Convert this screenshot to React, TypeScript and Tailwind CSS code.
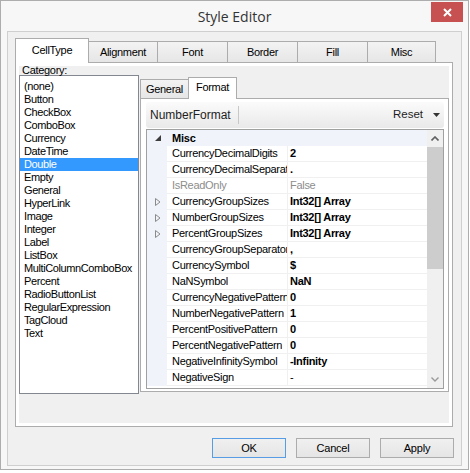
import React from "react";

const categories = [
  "(none)", "Button", "CheckBox", "ComboBox", "Currency", "DateTime", "Double", "Empty",
  "General", "HyperLink", "Image", "Integer", "Label", "ListBox", "MultiColumnComboBox",
  "Percent", "RadioButtonList", "RegularExpression", "TagCloud", "Text",
];

const outerTabs = [
  { label: "CellType", w: "w-[74px]" },
  { label: "Alignment", w: "w-[70px]" },
  { label: "Font", w: "w-[71px]" },
  { label: "Border", w: "w-[71px]" },
  { label: "Fill", w: "w-[71px]" },
  { label: "Misc", w: "w-[69px]" },
];

type Row = { name: string; value: string; bold?: boolean; gray?: boolean; expand?: boolean };

const rows: Row[] = [
  { name: "CurrencyDecimalDigits", value: "2", bold: true },
  { name: "CurrencyDecimalSeparator", value: ".", bold: true },
  { name: "IsReadOnly", value: "False", gray: true },
  { name: "CurrencyGroupSizes", value: "Int32[] Array", bold: true, expand: true },
  { name: "NumberGroupSizes", value: "Int32[] Array", bold: true, expand: true },
  { name: "PercentGroupSizes", value: "Int32[] Array", bold: true, expand: true },
  { name: "CurrencyGroupSeparator", value: ",", bold: true },
  { name: "CurrencySymbol", value: "$", bold: true },
  { name: "NaNSymbol", value: "NaN", bold: true },
  { name: "CurrencyNegativePattern", value: "0", bold: true },
  { name: "NumberNegativePattern", value: "1", bold: true },
  { name: "PercentPositivePattern", value: "0", bold: true },
  { name: "PercentNegativePattern", value: "0", bold: true },
  { name: "NegativeInfinitySymbol", value: "-Infinity", bold: true },
  { name: "NegativeSign", value: "-" },
];

const sans = "font-['Liberation_Sans',Arial,sans-serif]";

function GridRow({ row }: { row: Row }) {
  return (
    <div className="flex h-[16px]">
      <div className="w-[20px] bg-[#f0f4fa] flex items-center justify-center">
        {row.expand && (
          <svg width="6" height="8" viewBox="0 0 6 8" className="ml-[2px]">
            <path d="M0.5 0.5 L5 4 L0.5 7.5 Z" fill="none" stroke="#8a8a8a" strokeWidth="1" />
          </svg>
        )}
      </div>
      <div
        className={`w-[120px] border-b border-[#f0f0f0] pl-[5px] overflow-hidden whitespace-nowrap leading-[15px] tracking-[-0.3px] ${
          row.gray ? "text-[#8d8d8d]" : "text-black"
        }`}
      >
        {row.name}
      </div>
      <div
        className={`flex-1 border-l border-b border-[#f0f0f0] pl-[2px] whitespace-nowrap leading-[15px] tracking-[-0.3px] ${
          row.bold ? "font-bold text-black" : row.gray ? "text-[#8d8d8d]" : "text-black"
        }`}
      >
        {row.value}
      </div>
    </div>
  );
}

export default function App() {
  return (
    <div className={`w-[470px] h-[473px] bg-white ${sans} text-[11px] text-black`}>
      <div className="w-[469px] h-[470px] border border-[#adadad] bg-[#f7f7f7] flex flex-col">
        {/* title bar */}
        <div className="relative h-[30px] flex items-center justify-center">
          <span className="font-['Open_Sans',sans-serif] text-[14px] text-[#333333] mt-[1px]">Style Editor</span>
          <div className="absolute right-[5px] top-[1px] w-[32px] h-[20px] bg-[#c75050] flex items-center justify-center">
            <svg width="9" height="9" viewBox="0 0 9 9">
              <path d="M1 1 L8 8 M8 1 L1 8" stroke="white" strokeWidth="2" />
            </svg>
          </div>
        </div>

        {/* client area */}
        <div className="mx-[6px] h-[435px] border border-[#cfcfcf] bg-[#f0f0f0] pl-[7px] pt-[6px] flex flex-col">
          {/* outer tabs */}
          <div className="flex items-end h-[24px] tracking-[-0.3px]">
            {outerTabs.map((t, i) =>
              i === 0 ? (
                <div
                  key={t.label}
                  className={`${t.w} h-[25px] -mb-px relative z-10 bg-white border border-b-0 border-[#acacac] flex items-center justify-center pb-[2px]`}
                >
                  {t.label}
                </div>
              ) : (
                <div
                  key={t.label}
                  className={`${t.w} h-[21px] -ml-px bg-gradient-to-b from-[#f3f3f3] to-[#e6e6e6] border border-b-0 border-[#acacac] flex items-center justify-center`}
                >
                  {t.label}
                </div>
              )
            )}
          </div>

          {/* outer tab page */}
          <div className="w-[438px] h-[365px] border border-[#acacac] bg-white p-[3px]">
            <div className="h-full bg-[#f0f0f0] flex gap-[1px]">
              {/* category column */}
              <div className="w-[120px] flex flex-col">
                <div className="h-[9px] leading-[8px] pl-[3px] tracking-[-0.3px] relative z-10">Category:</div>
                <div className="h-[319px] border border-[#828790] bg-white pt-[4px] tracking-[-0.4px]">
                  {categories.map((c) => (
                    <div
                      key={c}
                      className={`h-[13px] leading-[13px] pl-[4px] ${
                        c === "Double" ? "bg-[#3399ff] text-white" : ""
                      }`}
                    >
                      {c}
                    </div>
                  ))}
                </div>
              </div>

              {/* nested tab control */}
              <div className="w-[309px] pt-[11px] flex flex-col">
                <div className="flex items-end h-[21px] tracking-[-0.3px]">
                  <div className="w-[49px] h-[19px] bg-gradient-to-b from-[#f3f3f3] to-[#e6e6e6] border border-b-0 border-[#acacac] flex items-center justify-center">
                    General
                  </div>
                  <div className="w-[49px] h-[22px] -ml-px -mb-px relative z-10 bg-white border border-b-0 border-[#acacac] flex items-center justify-center pb-[3px]">
                    Format
                  </div>
                </div>
                <div className="h-[294px] border border-[#acacac] bg-white pl-[5px] pr-[4px] pt-[3px] flex flex-col">
                  {/* toolbar */}
                  <div className="h-[26px] rounded-[3px] bg-gradient-to-b from-[#fbfbfb] to-[#e9e9e9] flex items-center">
                    <span className="text-[12px] pl-[4px] text-[#1e1e1e]">NumberFormat</span>
                    <div className="ml-[7px] w-[1px] h-[18px] bg-[#c8c8c8]" />
                    <div className="flex-1" />
                    <span className="text-[11.5px] text-[#1e1e1e]">Reset</span>
                    <svg width="7" height="4" viewBox="0 0 7 4" className="ml-[10px] mr-[4px]">
                      <path d="M0 0 L7 0 L3.5 4 Z" fill="#333" />
                    </svg>
                  </div>
                  {/* property grid */}
                  <div className="mt-[1px] h-[260px] border border-[#a0a0a0] bg-white flex">
                    <div className="flex-1 flex flex-col">
                      <div className="flex h-[16px] bg-[#f0f4fa] items-center">
                        <div className="w-[20px] flex items-center justify-center">
                          <svg width="6" height="6" viewBox="0 0 6 6" className="ml-[2px]">
                            <path d="M6 0 L6 6 L0 6 Z" fill="#3c3c3c" />
                          </svg>
                        </div>
                        <span className="pl-[5px] font-bold tracking-[-0.2px]">Misc</span>
                      </div>
                      {rows.map((r) => (
                        <GridRow key={r.name} row={r} />
                      ))}
                    </div>
                    {/* scrollbar */}
                    <div className="w-[16px] bg-[#f0f0f0] flex flex-col">
                      <div className="h-[17px] flex items-center justify-center">
                        <svg width="8" height="5" viewBox="0 0 8 5">
                          <path d="M0.5 4.5 L4 1 L7.5 4.5" fill="none" stroke="#606060" strokeWidth="1.6" />
                        </svg>
                      </div>
                      <div className="h-[122px] bg-[#cdcdcd]" />
                      <div className="flex-1" />
                      <div className="h-[17px] flex items-center justify-center">
                        <svg width="8" height="5" viewBox="0 0 8 5">
                          <path d="M0.5 0.5 L4 4 L7.5 0.5" fill="none" stroke="#9a9a9a" strokeWidth="1.4" />
                        </svg>
                      </div>
                    </div>
                  </div>
                </div>
              </div>
            </div>
          </div>

          {/* buttons */}
          <div className="mt-[11px] pr-[7px] flex justify-end gap-[10px] tracking-[-0.2px]">
            <button className="w-[74px] h-[20px] border border-[#569de5] bg-gradient-to-b from-[#f0f0f0] to-[#e5e5e5] leading-[18px]">
              OK
            </button>
            <button className="w-[74px] h-[20px] border border-[#acacac] bg-gradient-to-b from-[#f0f0f0] to-[#e5e5e5] leading-[18px]">
              Cancel
            </button>
            <button className="w-[74px] h-[20px] border border-[#acacac] bg-gradient-to-b from-[#f0f0f0] to-[#e5e5e5] leading-[18px]">
              Apply
            </button>
          </div>
        </div>
      </div>
    </div>
  );
}
